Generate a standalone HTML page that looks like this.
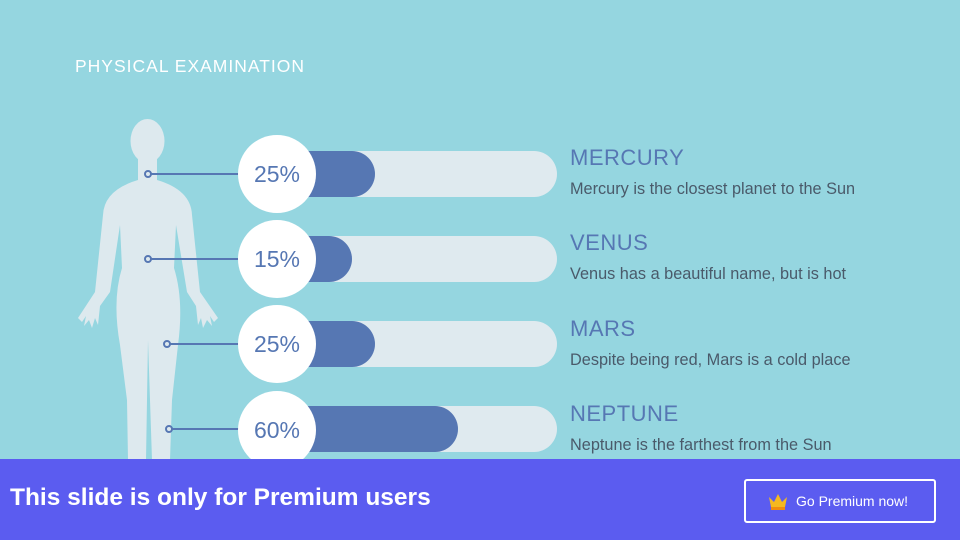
<!DOCTYPE html>
<html><head><meta charset="utf-8"><style>
body{margin:0;width:960px;height:540px;overflow:hidden;background:#95d6e0;font-family:"Liberation Sans",sans-serif;position:relative}
.t{position:absolute;left:75px;top:56px;color:#fff;font-size:17.5px;letter-spacing:1px}
.track{position:absolute;left:277px;width:280px;height:46px;border-radius:23px;background:#dfeaef}
.fill{position:absolute;left:277px;height:46px;border-radius:0 23px 23px 0;background:#5677b3}
.c{position:absolute;left:238px;width:78px;height:78px;border-radius:50%;background:#fff;color:#5677b3;font-size:23px;line-height:78px;text-align:center}
.h{position:absolute;left:570px;color:#5677b3;font-size:22px;letter-spacing:.5px}
.d{position:absolute;left:570px;color:#4a5a6a;font-size:16.3px}
.ban{position:absolute;left:0;top:459px;width:960px;height:81px;background:#5b5cf0}
.ban .b{position:absolute;left:10px;top:25px;color:#fff;font-weight:bold;font-size:24.5px}
.btn{position:absolute;left:744px;top:20px;width:192px;height:44px;border:2px solid #fff;border-radius:3px;box-sizing:border-box;color:#fff;font-size:14px;line-height:40px;padding-left:50px}
</style></head><body>
<div class="t">PHYSICAL EXAMINATION</div>
<svg width="960" height="540" style="position:absolute;left:0;top:0">
<g fill="#dde9ee">
<ellipse cx="147.5" cy="141" rx="17" ry="22"/>
<rect x="138" y="150" width="19" height="42"/>
<path d="M138 180 Q104 190 103 215 L95 292 L78 318 L82 322 L86 316 L84 326 L89 320 L92 328 L95 318 L98 325 L100 306 L110 292 L120 225 L122 268 Q112 300 120 345 L127 400 L128 460 L146 460 L147 400 L148 340 L150 400 L152 460 L170 460 L172 400 L178 345 Q184 300 174 268 L176 225 L187 292 L196 306 L198 325 L201 318 L203 328 L207 320 L212 326 L210 316 L214 322 L218 318 L200 292 L192 215 Q191 190 157 180 Z"/>
</g>
<g stroke="#5677b3" stroke-width="2" fill="none">
<line x1="151" y1="174" x2="240" y2="174"/><circle cx="148" cy="174" r="3" fill="#dde9ee"/>
<line x1="151" y1="259" x2="240" y2="259"/><circle cx="148" cy="259" r="3" fill="#dde9ee"/>
<line x1="170" y1="344" x2="240" y2="344"/><circle cx="167" cy="344" r="3" fill="#dde9ee"/>
<line x1="172" y1="429" x2="240" y2="429"/><circle cx="169" cy="429" r="3" fill="#dde9ee"/>
</g></svg>
<div class="track" style="top:151px"></div><div class="fill" style="top:151px;width:98px"></div>
<div class="track" style="top:236px"></div><div class="fill" style="top:236px;width:75px"></div>
<div class="track" style="top:321px"></div><div class="fill" style="top:321px;width:98px"></div>
<div class="track" style="top:406px"></div><div class="fill" style="top:406px;width:181px"></div>
<div class="c" style="top:135px">25%</div>
<div class="c" style="top:220px">15%</div>
<div class="c" style="top:305px">25%</div>
<div class="c" style="top:391px">60%</div>
<div class="h" style="top:145px">MERCURY</div><div class="d" style="top:180px">Mercury is the closest planet to the Sun</div>
<div class="h" style="top:230px">VENUS</div><div class="d" style="top:265px">Venus has a beautiful name, but is hot</div>
<div class="h" style="top:316px">MARS</div><div class="d" style="top:351px">Despite being red, Mars is a cold place</div>
<div class="h" style="top:401px">NEPTUNE</div><div class="d" style="top:436px">Neptune is the farthest from the Sun</div>
<div class="ban"><div class="b">This slide is only for Premium users</div>
<div class="btn"><svg width="20" height="18" style="position:absolute;left:22px;top:12px"><path d="M1 4l5 5 4-8 4 8 5-5-2 10H3z" fill="#f5b820"/><rect x="3" y="14" width="14" height="3" fill="#f08c10"/></svg>Go Premium now!</div></div>
</body></html>
